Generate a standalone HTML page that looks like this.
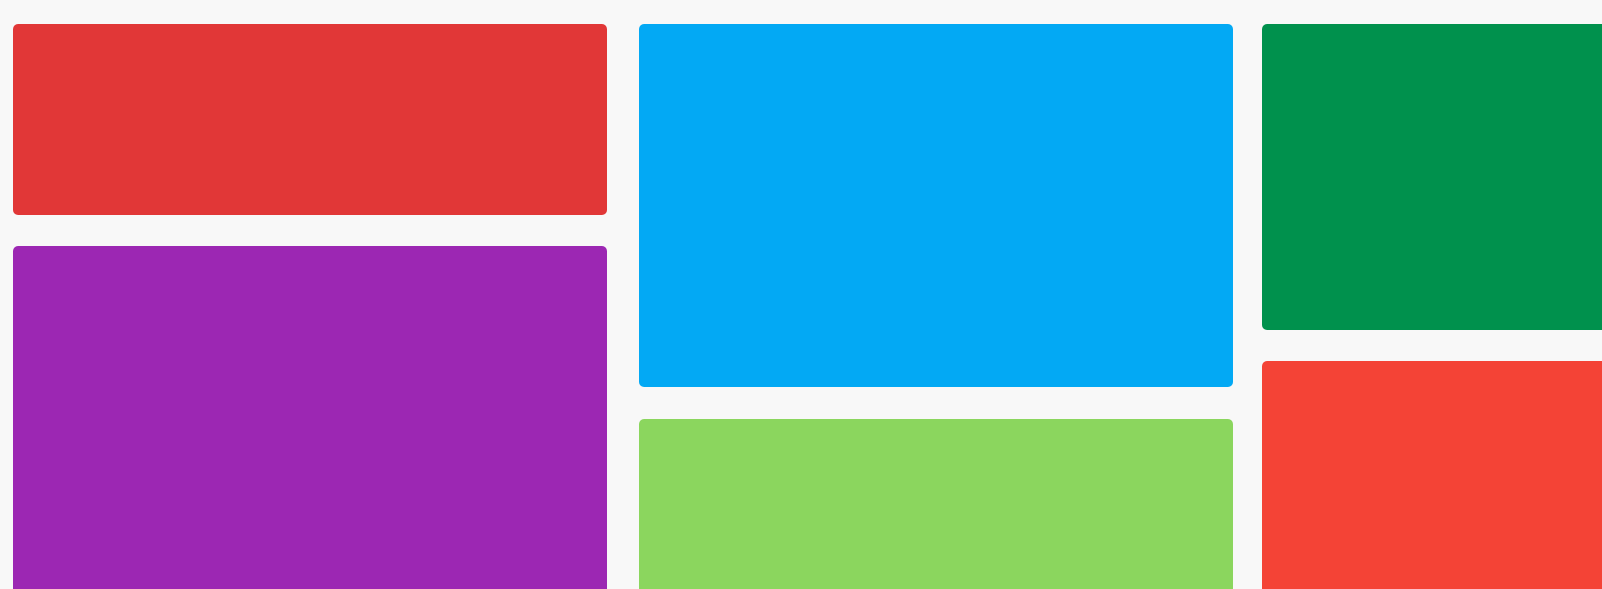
<!DOCTYPE html>
<html><head><style>
html,body{margin:0;padding:0;width:1602px;height:589px;overflow:hidden;background:#f8f8f8}
#w{position:relative;width:1602px;height:589px;overflow:hidden}
#w div{position:absolute;border-radius:5px}
</style></head><body><div id="w">
<div style="left:13px;top:24px;width:594px;height:191px;background:#e13737"></div>
<div style="left:13px;top:246px;width:594px;height:360px;background:#9c27b3"></div>
<div style="left:639px;top:24px;width:594px;height:363px;background:#03a9f4"></div>
<div style="left:639px;top:419px;width:594px;height:190px;background:#8bd65e"></div>
<div style="left:1262px;top:24px;width:360px;height:306px;background:#00914d"></div>
<div style="left:1262px;top:361px;width:360px;height:248px;background:#f44336"></div>
</div></body></html>
